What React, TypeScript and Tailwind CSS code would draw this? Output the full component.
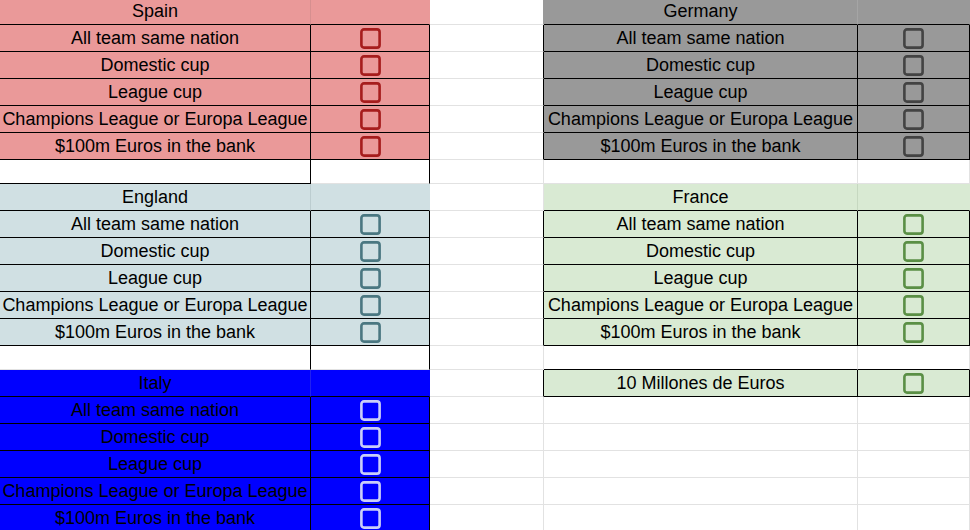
import React from "react"

type Cell = {
  bg: string
  r: string
  b: string
  text?: string
  check?: string
}

type Row = {
  h: string
  cells: Cell[]
}

const widths = ["w-[311px]", "w-[119px]", "w-[114px]", "w-[314px]", "w-[112px]"]

const W = "bg-white"
const K = "border-r-black"
const KB = "border-b-black"
const G = "border-r-[#e2e2e2]"
const GB = "border-b-[#e2e2e2]"

const spain = { bg: "bg-[#ea9999]", check: "text-[#a61d1d]", head: "border-r-[#d68f8f]", edge: "border-r-[#ea9999]" }
const germany = { bg: "bg-[#999999]", check: "text-[#434343]", head: "border-r-[#a5a5a5]", edge: "border-r-[#999999]" }
const england = { bg: "bg-[#d0e0e3]", check: "text-[#4a7781]", head: "border-r-[#bccdd0]", edge: "border-r-[#d0e0e3]" }
const france = { bg: "bg-[#d9ead3]", check: "text-[#5a8f45]", head: "border-r-[#c6d8c0]", edge: "border-r-[#d9ead3]" }
const italy = { bg: "bg-[#0000ff]", check: "text-[#c9cdf9]", head: "border-r-[#2020f0]", edge: "border-r-[#0000ff]" }

const goals = [
  "All team same nation",
  "Domestic cup",
  "League cup",
  "Champions League or Europa League",
  "$100m Euros in the bank",
]

const buildRows = (): Row[] => {
  const rows: Row[] = []

  // Spain / Germany
  rows.push({
    h: "h-[27px] -mt-[2px]",
    cells: [
      { bg: spain.bg, r: spain.head, b: KB, text: "Spain" },
      { bg: spain.bg, r: spain.edge, b: KB },
      { bg: W, r: "border-r-[#999999]", b: GB },
      { bg: germany.bg, r: germany.head, b: KB, text: "Germany" },
      { bg: germany.bg, r: germany.edge, b: KB },
    ],
  })
  goals.forEach((g) =>
    rows.push({
      h: "h-[27px]",
      cells: [
        { bg: spain.bg, r: K, b: KB, text: g },
        { bg: spain.bg, r: K, b: KB, check: spain.check },
        { bg: W, r: K, b: GB },
        { bg: germany.bg, r: K, b: KB, text: g },
        { bg: germany.bg, r: K, b: KB, check: germany.check },
      ],
    })
  )
  rows.push({
    h: "h-[24px]",
    cells: [
      { bg: W, r: K, b: KB },
      { bg: W, r: K, b: GB },
      { bg: W, r: G, b: GB },
      { bg: W, r: G, b: GB },
      { bg: W, r: G, b: GB },
    ],
  })

  // England / France
  rows.push({
    h: "h-[27px]",
    cells: [
      { bg: england.bg, r: england.head, b: KB, text: "England" },
      { bg: england.bg, r: england.edge, b: KB },
      { bg: W, r: G, b: GB },
      { bg: france.bg, r: france.head, b: KB, text: "France" },
      { bg: france.bg, r: france.edge, b: KB },
    ],
  })
  goals.forEach((g) =>
    rows.push({
      h: "h-[27px]",
      cells: [
        { bg: england.bg, r: K, b: KB, text: g },
        { bg: england.bg, r: K, b: KB, check: england.check },
        { bg: W, r: K, b: GB },
        { bg: france.bg, r: K, b: KB, text: g },
        { bg: france.bg, r: K, b: KB, check: france.check },
      ],
    })
  )
  rows.push({
    h: "h-[24px]",
    cells: [
      { bg: W, r: K, b: GB },
      { bg: W, r: K, b: GB },
      { bg: W, r: G, b: GB },
      { bg: W, r: G, b: KB },
      { bg: W, r: G, b: KB },
    ],
  })

  // Italy / bonus
  rows.push({
    h: "h-[27px]",
    cells: [
      { bg: italy.bg, r: italy.head, b: KB, text: "Italy" },
      { bg: italy.bg, r: italy.edge, b: KB },
      { bg: W, r: K, b: GB },
      { bg: france.bg, r: K, b: KB, text: "10 Millones de Euros" },
      { bg: france.bg, r: K, b: KB, check: france.check },
    ],
  })
  goals.forEach((g) =>
    rows.push({
      h: "h-[27px]",
      cells: [
        { bg: italy.bg, r: K, b: KB, text: g },
        { bg: italy.bg, r: K, b: KB, check: italy.check },
        { bg: W, r: G, b: GB },
        { bg: W, r: G, b: GB },
        { bg: W, r: G, b: GB },
      ],
    })
  )

  return rows
}

const Checkbox = ({ color }: { color: string }) => (
  <svg width="21" height="21" viewBox="0 0 21 21" className={color}>
    <rect x="1.4" y="1.4" width="18.2" height="18.2" rx="2.6" fill="none" stroke="currentColor" strokeWidth="2.6" />
  </svg>
)

const App: React.FC = () => {
  const rows = buildRows()

  return (
    <div className="w-[970px] h-[530px] overflow-hidden bg-white font-['Liberation_Sans',Arial,sans-serif] text-[18px] leading-[20px] text-black">
      {rows.map((row, i) => (
        <div key={i} className={`flex ${row.h}`}>
          {row.cells.map((c, j) => (
            <div
              key={j}
              className={`${widths[j]} shrink-0 h-full border-r border-b ${c.bg} ${c.r} ${c.b} flex items-center justify-center overflow-hidden whitespace-nowrap`}
            >
              {c.text}
              {c.check && <Checkbox color={c.check} />}
            </div>
          ))}
        </div>
      ))}
    </div>
  )
}

export default App
